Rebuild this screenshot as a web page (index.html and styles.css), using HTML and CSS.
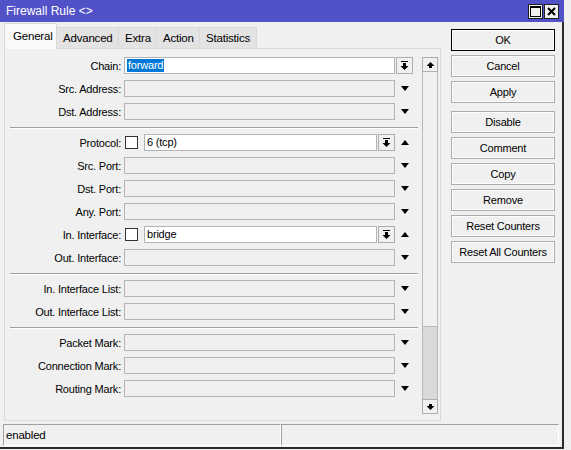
FILE: index.html
```html
<!DOCTYPE html>
<html lang="en">
<head>
    <meta charset="UTF-8">
    <title>Firewall Rule</title>
    <link rel="stylesheet" href="styles.css">
</head>
<body>
    <div class="window">
        <div class="titlebar">
            <span class="title">Firewall Rule &lt;&gt;</span>
            <div class="title-btns">
                <span class="tbtn">
                    <svg width="11" height="11" viewBox="0 0 11 11"><rect x="0.5" y="0.5" width="10" height="10" fill="none" stroke="#000"/><rect x="0" y="0" width="11" height="2" fill="#000"/></svg>
                </span>
                <span class="tbtn">
                    <svg width="9" height="9" viewBox="0 0 9 9"><path d="M1 1 L8 8 M8 1 L1 8" stroke="#000" stroke-width="2"/></svg>
                </span>
            </div>
        </div>

        <div class="body">
            <div class="main">
                <div class="tabs">
                    <span class="tab active">General</span>
                    <span class="tab">Advanced</span>
                    <span class="tab">Extra</span>
                    <span class="tab">Action</span>
                    <span class="tab">Statistics</span>
                </div>
                <div class="panel">
                    <div class="form">
                        <div class="row">
                            <label>Chain:</label>
                            <div class="field">
                                <div class="input white"><span class="sel">forward</span></div>
                            </div>
                            <span class="icon">
                                <span class="dbtn">
                                    <svg width="9" height="9" viewBox="0 0 9 9"><rect x="1" y="0" width="7" height="1" fill="#000"/><rect x="3" y="2" width="3" height="3" fill="#000"/><path d="M0.5 5 L8.5 5 L4.5 9 Z" fill="#000"/></svg>
                                </span>
                            </span>
                        </div>
                        <div class="row">
                            <label>Src. Address:</label>
                            <div class="field"><div class="input"></div></div>
                            <span class="icon"><span class="tri-down"></span></span>
                        </div>
                        <div class="row">
                            <label>Dst. Address:</label>
                            <div class="field"><div class="input"></div></div>
                            <span class="icon"><span class="tri-down"></span></span>
                        </div>

                        <div class="sep"></div>

                        <div class="row">
                            <label>Protocol:</label>
                            <div class="field">
                                <span class="check"></span>
                                <div class="input white">6 (tcp)</div>
                                <span class="dbtn">
                                    <svg width="9" height="9" viewBox="0 0 9 9"><rect x="1" y="0" width="7" height="1" fill="#000"/><rect x="3" y="2" width="3" height="3" fill="#000"/><path d="M0.5 5 L8.5 5 L4.5 9 Z" fill="#000"/></svg>
                                </span>
                            </div>
                            <span class="icon"><span class="tri-up"></span></span>
                        </div>
                        <div class="row">
                            <label>Src. Port:</label>
                            <div class="field"><div class="input"></div></div>
                            <span class="icon"><span class="tri-down"></span></span>
                        </div>
                        <div class="row">
                            <label>Dst. Port:</label>
                            <div class="field"><div class="input"></div></div>
                            <span class="icon"><span class="tri-down"></span></span>
                        </div>
                        <div class="row">
                            <label>Any. Port:</label>
                            <div class="field"><div class="input"></div></div>
                            <span class="icon"><span class="tri-down"></span></span>
                        </div>
                        <div class="row">
                            <label>In. Interface:</label>
                            <div class="field">
                                <span class="check"></span>
                                <div class="input white">bridge</div>
                                <span class="dbtn">
                                    <svg width="9" height="9" viewBox="0 0 9 9"><rect x="1" y="0" width="7" height="1" fill="#000"/><rect x="3" y="2" width="3" height="3" fill="#000"/><path d="M0.5 5 L8.5 5 L4.5 9 Z" fill="#000"/></svg>
                                </span>
                            </div>
                            <span class="icon"><span class="tri-up"></span></span>
                        </div>
                        <div class="row">
                            <label>Out. Interface:</label>
                            <div class="field"><div class="input"></div></div>
                            <span class="icon"><span class="tri-down"></span></span>
                        </div>

                        <div class="sep"></div>

                        <div class="row">
                            <label>In. Interface List:</label>
                            <div class="field"><div class="input"></div></div>
                            <span class="icon"><span class="tri-down"></span></span>
                        </div>
                        <div class="row">
                            <label>Out. Interface List:</label>
                            <div class="field"><div class="input"></div></div>
                            <span class="icon"><span class="tri-down"></span></span>
                        </div>

                        <div class="sep"></div>

                        <div class="row">
                            <label>Packet Mark:</label>
                            <div class="field"><div class="input"></div></div>
                            <span class="icon"><span class="tri-down"></span></span>
                        </div>
                        <div class="row">
                            <label>Connection Mark:</label>
                            <div class="field"><div class="input"></div></div>
                            <span class="icon"><span class="tri-down"></span></span>
                        </div>
                        <div class="row">
                            <label>Routing Mark:</label>
                            <div class="field"><div class="input"></div></div>
                            <span class="icon"><span class="tri-down"></span></span>
                        </div>
                    </div>

                    <div class="scrollbar">
                        <span class="sbtn">
                            <svg width="9" height="8" viewBox="0 0 9 8"><path d="M0.5 5 L8.5 5 L4.5 1 Z" fill="#000"/><rect x="3" y="5" width="3" height="2" fill="#000"/></svg>
                        </span>
                        <div class="thumb"></div>
                        <div class="track"></div>
                        <span class="sbtn">
                            <svg width="9" height="8" viewBox="0 0 9 8"><rect x="3" y="1" width="3" height="2" fill="#000"/><path d="M0.5 3 L8.5 3 L4.5 7 Z" fill="#000"/></svg>
                        </span>
                    </div>
                </div>
            </div>

            <div class="actions">
                <button class="btn default">OK</button>
                <button class="btn">Cancel</button>
                <button class="btn">Apply</button>
                <button class="btn gap">Disable</button>
                <button class="btn">Comment</button>
                <button class="btn">Copy</button>
                <button class="btn">Remove</button>
                <button class="btn">Reset Counters</button>
                <button class="btn">Reset All Counters</button>
            </div>
        </div>

        <div class="statusbar">
            <div class="status-cell left">enabled</div>
            <div class="status-cell right"></div>
        </div>
    </div>
</body>
</html>
```

FILE: styles.css
```css
html, body {
    margin: 0;
    padding: 0;
}
body {
    background: #f0f0f0;
    font-family: "Liberation Sans", Arial, sans-serif;
    font-size: 11px;
    letter-spacing: -0.2px;
    color: #000;
}
.window {
    width: 562px;
    height: 447px;
    border-right: 2px solid #2b2b2b;
    border-bottom: 2px solid #2b2b2b;
    background: #f0f0f0;
    display: flex;
    flex-direction: column;
}
.titlebar {
    height: 22px;
    background: #5152c7;
    display: flex;
    align-items: center;
    justify-content: space-between;
    margin-right: -2px;
}
.title {
    color: #fff;
    padding-left: 6px;
    font-size: 12px;
    letter-spacing: 0;
}
.title-btns {
    display: flex;
    gap: 1px;
    margin-right: 5px;
    margin-top: 1px;
}
.tbtn {
    width: 13px;
    height: 13px;
    background: #f0f0f0;
    border: 1px solid #1e1e1e;
    display: flex;
    align-items: center;
    justify-content: center;
}
.body {
    flex: 1;
    display: flex;
}
.main {
    width: 437px;
    margin-left: 4px;
    display: flex;
    flex-direction: column;
}
.tabs {
    display: flex;
    height: 26px;
    align-items: flex-end;
}
.tab {
    height: 21px;
    line-height: 21px;
    padding: 0 6px;
    background: #e3e3e3;
    border: 1px solid #d9d9d9;
    border-bottom: none;
    border-left: none;
    box-sizing: border-box;
    font-size: 11.5px;
}
.tab.active {
    height: 26px;
    line-height: 24px;
    padding: 0 8px;
    background: #f9f9f9;
    border-left: 1px solid #d9d9d9;
    margin-bottom: -1px;
    position: relative;
    z-index: 1;
    width: 53px;
}
.tab:nth-child(2) { width: 62px; }
.tab:nth-child(3) { width: 38px; }
.tab:nth-child(4) { width: 43px; }
.tab:nth-child(5) { width: 57px; }
.panel {
    flex: 1;
    border: 1px solid #d9d9d9;
    display: flex;
    margin-bottom: 1px;
}
.form {
    padding-top: 5px;
    width: 412px;
}
.row {
    height: 23px;
    display: flex;
    align-items: center;
}
.row label {
    width: 116px;
    text-align: right;
    padding-right: 3px;
    white-space: nowrap;
}
.field {
    width: 271px;
    display: flex;
    align-items: center;
}
.input {
    flex: 1;
    height: 17px;
    box-sizing: border-box;
    border: 1px solid #b4b4b4;
    background: #f0f0f0;
    line-height: 15px;
    padding-left: 2px;
    overflow: hidden;
    white-space: nowrap;
}
.input.white {
    background: #fff;
}
.sel {
    background: #0078d7;
    color: #fff;
    padding: 0 1px;
    display: inline-block;
    line-height: 13px;
}
.check {
    width: 13px;
    height: 13px;
    box-sizing: border-box;
    border: 1px solid #333;
    background: #fff;
    margin-left: 1px;
    margin-right: 6px;
}
.dbtn {
    width: 17px;
    height: 17px;
    flex: none;
    box-sizing: border-box;
    border: 1px solid #adadad;
    background: #f0f0f0;
    display: flex;
    align-items: center;
    justify-content: center;
}
.field .dbtn {
    margin-left: 1px;
}
.icon {
    width: 17px;
    height: 17px;
    margin-left: 1px;
    display: flex;
    align-items: center;
    justify-content: center;
}
.tri-down {
    width: 0;
    height: 0;
    border-left: 4.5px solid transparent;
    border-right: 4.5px solid transparent;
    border-top: 5px solid #000;
}
.tri-up {
    width: 0;
    height: 0;
    border-left: 4.5px solid transparent;
    border-right: 4.5px solid transparent;
    border-bottom: 5px solid #000;
}
.sep {
    height: 8px;
    box-sizing: border-box;
    padding-top: 4px;
    margin-left: 5px;
    margin-right: -1px;
}
.sep::after {
    content: "";
    display: block;
    height: 1px;
    background: #a0a0a0;
    border-bottom: 1px solid #fff;
}
.scrollbar {
    width: 16px;
    margin: 8px 0 6px 5px;
    display: flex;
    flex-direction: column;
}
.sbtn {
    height: 15px;
    box-sizing: border-box;
    border: 1px solid #adadad;
    background: #f0f0f0;
    display: flex;
    align-items: center;
    justify-content: center;
}
.thumb {
    height: 255px;
    box-sizing: border-box;
    border: 1px solid #b9b9b9;
    border-top: none;
    background: #f0f0f0;
}
.track {
    flex: 1;
    background: #d9d9d9;
    border-left: 1px solid #b9b9b9;
    border-right: 1px solid #b9b9b9;
}
.actions {
    width: 104px;
    margin-left: 10px;
    margin-top: 7px;
    display: flex;
    flex-direction: column;
    gap: 4px;
}
.btn {
    height: 22px;
    box-sizing: border-box;
    border: 1px solid #adadad;
    background: #f0f0f0;
    box-shadow: inset 0 0 0 1px #fdfdfd;
    font-family: "Liberation Sans", Arial, sans-serif;
    font-size: 11px;
    letter-spacing: -0.2px;
    color: #000;
    padding: 0;
}
.btn.default {
    border-color: #000;
}
.btn.gap {
    margin-top: 4px;
}
.statusbar {
    display: flex;
    margin: 2px 3px 1px 3px;
    height: 22px;
}
.status-cell {
    box-sizing: border-box;
    border-top: 1px solid #a0a0a0;
    border-left: 1px solid #a0a0a0;
    border-bottom: 1px solid #fff;
    border-right: 1px solid #fff;
    line-height: 20px;
    padding-left: 2px;
    font-size: 11.5px;
}
.status-cell.left {
    width: 278px;
}
.status-cell.right {
    flex: 1;
}
```
